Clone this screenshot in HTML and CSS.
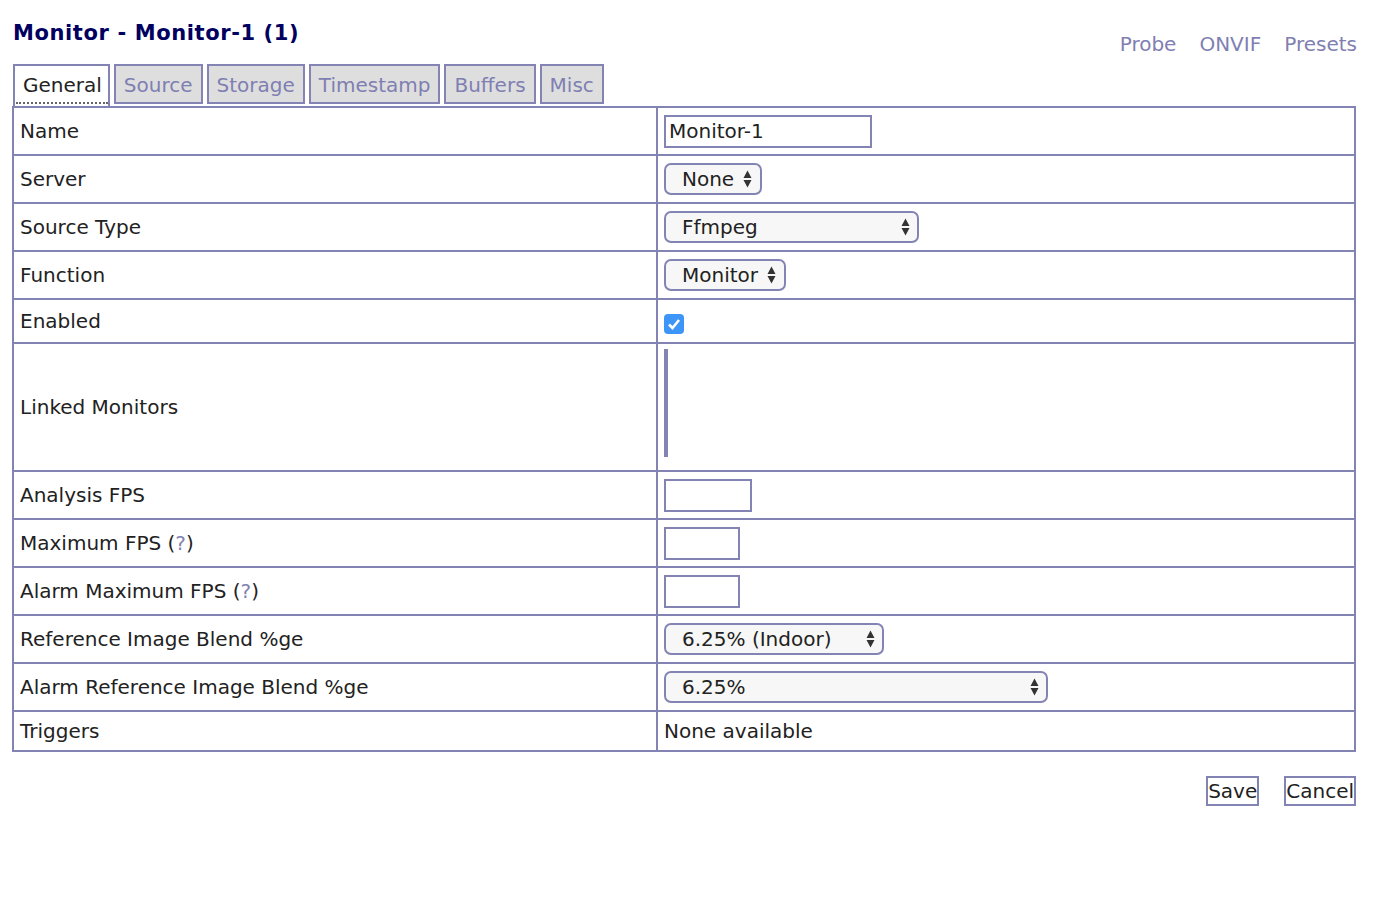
FILE: index.html
```html
<!DOCTYPE html>
<html lang="en">
<head>
    <meta charset="UTF-8">
    <title>Monitor - Monitor-1 (1)</title>
    <link rel="stylesheet" href="styles.css">
</head>
<body>

    <div id="page">
        <div id="header">
            <h2>Monitor - Monitor-1 (1)</h2>
            <div class="links">
                <a href="#">Probe</a>
                <a href="#">ONVIF</a>
                <a href="#">Presets</a>
            </div>
        </div>

        <ul class="tabs">
            <li class="active"><a href="#">General</a></li>
            <li><a href="#">Source</a></li>
            <li><a href="#">Storage</a></li>
            <li><a href="#">Timestamp</a></li>
            <li><a href="#">Buffers</a></li>
            <li><a href="#">Misc</a></li>
        </ul>

        <table class="form">
            <tr class="r48">
                <td class="label">Name</td>
                <td><input class="text name" type="text" value="Monitor-1"></td>
            </tr>
            <tr class="r48">
                <td class="label">Server</td>
                <td><span class="select w-none"><select><option>None</option></select><svg class="arrows" width="9" height="18" viewBox="0 0 9 18"><path d="M4.5 0.5L8.5 8H0.5Z M4.5 17.5L8.5 10H0.5Z" fill="#333"/></svg></span></td>
            </tr>
            <tr class="r48">
                <td class="label">Source Type</td>
                <td><span class="select w-source"><select><option>Ffmpeg</option></select><svg class="arrows" width="9" height="18" viewBox="0 0 9 18"><path d="M4.5 0.5L8.5 8H0.5Z M4.5 17.5L8.5 10H0.5Z" fill="#333"/></svg></span></td>
            </tr>
            <tr class="r48">
                <td class="label">Function</td>
                <td><span class="select w-function"><select><option>Monitor</option></select><svg class="arrows" width="9" height="18" viewBox="0 0 9 18"><path d="M4.5 0.5L8.5 8H0.5Z M4.5 17.5L8.5 10H0.5Z" fill="#333"/></svg></span></td>
            </tr>
            <tr class="r44">
                <td class="label">Enabled</td>
                <td>
                    <span class="check"><svg width="20" height="20" viewBox="0 0 20 20"><rect width="20" height="20" rx="4" fill="#3d95f7"/><path d="M5 10.5L8.5 14L15 6" stroke="#fff" stroke-width="2.6" fill="none"/></svg></span>
                </td>
            </tr>
            <tr class="r128">
                <td class="label">Linked Monitors</td>
                <td class="top"><div class="linked"></div></td>
            </tr>
            <tr class="r48">
                <td class="label">Analysis FPS</td>
                <td><input class="text fps" type="text"></td>
            </tr>
            <tr class="r48">
                <td class="label">Maximum FPS (<a href="#">?</a>)</td>
                <td><input class="text fps-small" type="text"></td>
            </tr>
            <tr class="r48">
                <td class="label">Alarm Maximum FPS (<a href="#">?</a>)</td>
                <td><input class="text fps-small" type="text"></td>
            </tr>
            <tr class="r48">
                <td class="label">Reference Image Blend %ge</td>
                <td><span class="select w-blend"><select><option>6.25% (Indoor)</option></select><svg class="arrows" width="9" height="18" viewBox="0 0 9 18"><path d="M4.5 0.5L8.5 8H0.5Z M4.5 17.5L8.5 10H0.5Z" fill="#333"/></svg></span></td>
            </tr>
            <tr class="r48">
                <td class="label">Alarm Reference Image Blend %ge</td>
                <td><span class="select w-alarm"><select><option>6.25%</option></select><svg class="arrows" width="9" height="18" viewBox="0 0 9 18"><path d="M4.5 0.5L8.5 8H0.5Z M4.5 17.5L8.5 10H0.5Z" fill="#333"/></svg></span></td>
            </tr>
            <tr class="r40">
                <td class="label">Triggers</td>
                <td>None available</td>
            </tr>
        </table>

        <div id="buttons">
            <button>Save</button>
            <button>Cancel</button>
        </div>
    </div>

</body>
</html>
```

FILE: styles.css
```css
body {
    margin: 0;
    font-family: 'DejaVu Sans', Verdana, sans-serif;
    color: #222;
    background-color: #fff;
}

a {
    color: #7f7fb2;
    text-decoration: none;
}

#page {
    width: 1344px;
    padding-left: 12px;
}

#header {
    display: flex;
    justify-content: space-between;
    align-items: flex-start;
    height: 64px;
}

#header h2 {
    margin: 19px 0 0 1px;
    font-size: 21px;
    letter-spacing: 0.6px;
    line-height: 28px;
    color: #000060;
}

#header .links {
    display: flex;
    gap: 23px;
    margin: 31px -1px 0 0;
    font-size: 20px;
    line-height: 26px;
}

.tabs {
    display: flex;
    align-items: flex-start;
    gap: 4px;
    margin: 0 0 0 1px;
    padding: 0;
    list-style: none;
}

.tabs li {
    height: 36px;
    padding: 0 8px;
    border: 2px solid #8484b4;
    background-color: #dedede;
    font-size: 20px;
    line-height: 38px;
}

.tabs li.active {
    height: 40px;
    padding: 0;
    border-bottom: none;
    background-color: #fff;
}

.tabs li.active a {
    display: block;
    height: 36px;
    margin: 0 0 0 1px;
    padding: 0 6px 0 7px;
    color: #222;
    border-bottom: 2px dotted #666;
}

table.form {
    width: 1344px;
    border-collapse: collapse;
    border: 2px solid #8484b4;
    font-size: 20px;
}

table.form td {
    border: 2px solid #8484b4;
    padding: 0 6px;
    vertical-align: middle;
}

table.form td.top {
    vertical-align: top;
}

table.form td.label {
    width: 630px;
}

tr.r48 td { height: 46px; }
tr.r44 td { height: 42px; }
tr.r128 td { height: 126px; }
tr.r40 td { height: 38px; }

input.text {
    box-sizing: border-box;
    height: 33px;
    margin: 0;
    padding: 0 3px;
    border: 2px solid #8484b4;
    font-family: inherit;
    font-size: 20px;
    color: #222;
    display: block;
}

input.name { width: 208px; }
input.fps { width: 88px; }
input.fps-small { width: 76px; }

.select {
    position: relative;
    display: block;
}

.select select {
    box-sizing: border-box;
    display: block;
    height: 32px;
    margin: 0;
    padding: 0 0 0 16px;
    appearance: none;
    -webkit-appearance: none;
    border: 2px solid #8484b4;
    border-radius: 7px;
    background-color: #f7f7f7;
    font-family: inherit;
    font-size: 20px;
    color: #222;
}

.select .arrows {
    position: absolute;
    top: 7px;
}

.w-none select { width: 98px; }
.w-none .arrows { left: 79px; }
.w-source select { width: 255px; }
.w-source .arrows { left: 237px; }
.w-function select { width: 122px; }
.w-function .arrows { left: 103px; }
.w-blend select { width: 220px; }
.w-blend .arrows { left: 202px; }
.w-alarm select { width: 384px; }
.w-alarm .arrows { left: 366px; }

.check {
    display: block;
    width: 20px;
    height: 20px;
    margin-top: 6px;
}

.check svg {
    display: block;
}

.linked {
    width: 4px;
    height: 108px;
    margin-top: 5px;
    background-color: #8484b4;
}

#buttons {
    display: flex;
    justify-content: flex-end;
    gap: 25px;
    margin-top: 24px;
}

#buttons button {
    height: 30px;
    padding: 0;
    border: 2px solid #8484b4;
    background-color: #fff;
    font-family: inherit;
    font-size: 20px;
    color: #222;
}
```
